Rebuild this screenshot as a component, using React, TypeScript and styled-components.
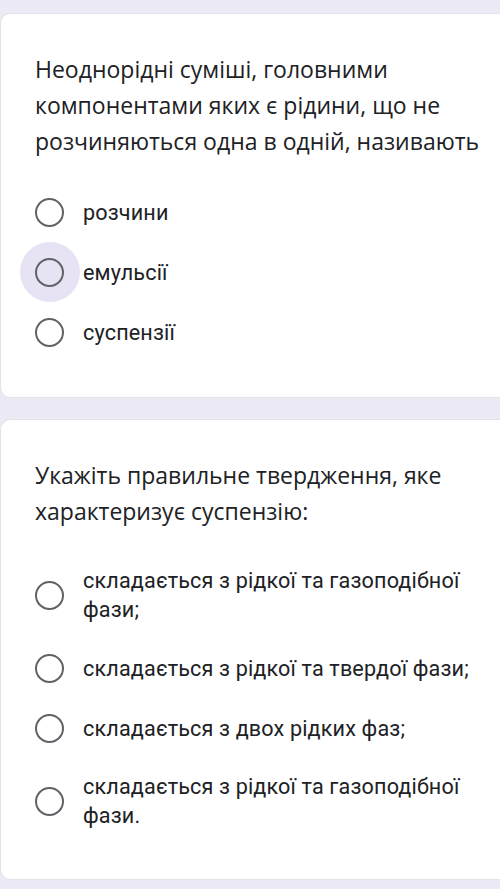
import styled, { createGlobalStyle } from 'styled-components';

const GlobalStyle = createGlobalStyle`
  html, body {
    margin: 0;
    padding: 0;
    background: #ecebf5;
  }
  * {
    box-sizing: border-box;
  }
`;

const Page = styled.div`
  display: flex;
  flex-direction: column;
  gap: 21px;
  padding: 13px 0 8px;
  min-height: 889px;
  background: #ecebf5;
`;

const Card = styled.section`
  background: #ffffff;
  border-radius: 10px 0 0 10px;
  border: 1px solid #e3e1ea;
  border-right: none;
  padding: 37px 10px 35px 34px;
`;

const Question = styled.div`
  font-family: 'Open Sans', 'Noto Sans', sans-serif;
  font-size: 23px;
  line-height: 36px;
  color: #202124;
  margin-bottom: 23px;
`;

const Options = styled.div`
  display: flex;
  flex-direction: column;
`;

const Option = styled.label`
  display: flex;
  align-items: center;
  gap: 19px;
  padding: 14px 0;
  min-height: 60px;
`;

const RadioWrap = styled.span`
  position: relative;
  z-index: 0;
  display: flex;
  flex: none;
`;

const Radio = styled.span<{ $hover?: boolean }>`
  position: relative;
  width: 29px;
  height: 29px;
  border: 2.5px solid #5f6368;
  border-radius: 50%;

  &::before {
    content: '';
    display: ${(p) => (p.$hover ? 'block' : 'none')};
    position: absolute;
    left: 50%;
    top: 50%;
    width: 60px;
    height: 60px;
    margin: -30px 0 0 -30px;
    border-radius: 50%;
    background: #e7e3f4;
    z-index: -1;
  }
`;

const OptionText = styled.span`
  font-family: Roboto, 'Noto Sans', sans-serif;
  font-size: 21.6px;
  line-height: 29px;
  letter-spacing: 0.15px;
  color: #202124;
  padding-right: 12px;
`;

type Q = { text: string; options: string[]; hover?: number };

const questions: Q[] = [
  {
    text: 'Неоднорідні суміші, головними компонентами яких є рідини, що не розчиняються одна в одній, називають',
    options: ['розчини', 'емульсії', 'суспензії'],
    hover: 1,
  },
  {
    text: 'Укажіть правильне твердження, яке характеризує суспензію:',
    options: [
      'складається з рідкої та газоподібної фази;',
      'складається з рідкої та твердої фази;',
      'складається з двох рідких фаз;',
      'складається з рідкої та газоподібної фази.',
    ],
  },
];

export default function App() {
  return (
    <>
      <GlobalStyle />
      <Page>
        {questions.map((q, qi) => (
          <Card key={qi}>
            <Question>{q.text}</Question>
            <Options>
              {q.options.map((o, oi) => (
                <Option key={oi}>
                  <RadioWrap>
                    <Radio $hover={q.hover === oi} />
                  </RadioWrap>
                  <OptionText>{o}</OptionText>
                </Option>
              ))}
            </Options>
          </Card>
        ))}
      </Page>
    </>
  );
}
